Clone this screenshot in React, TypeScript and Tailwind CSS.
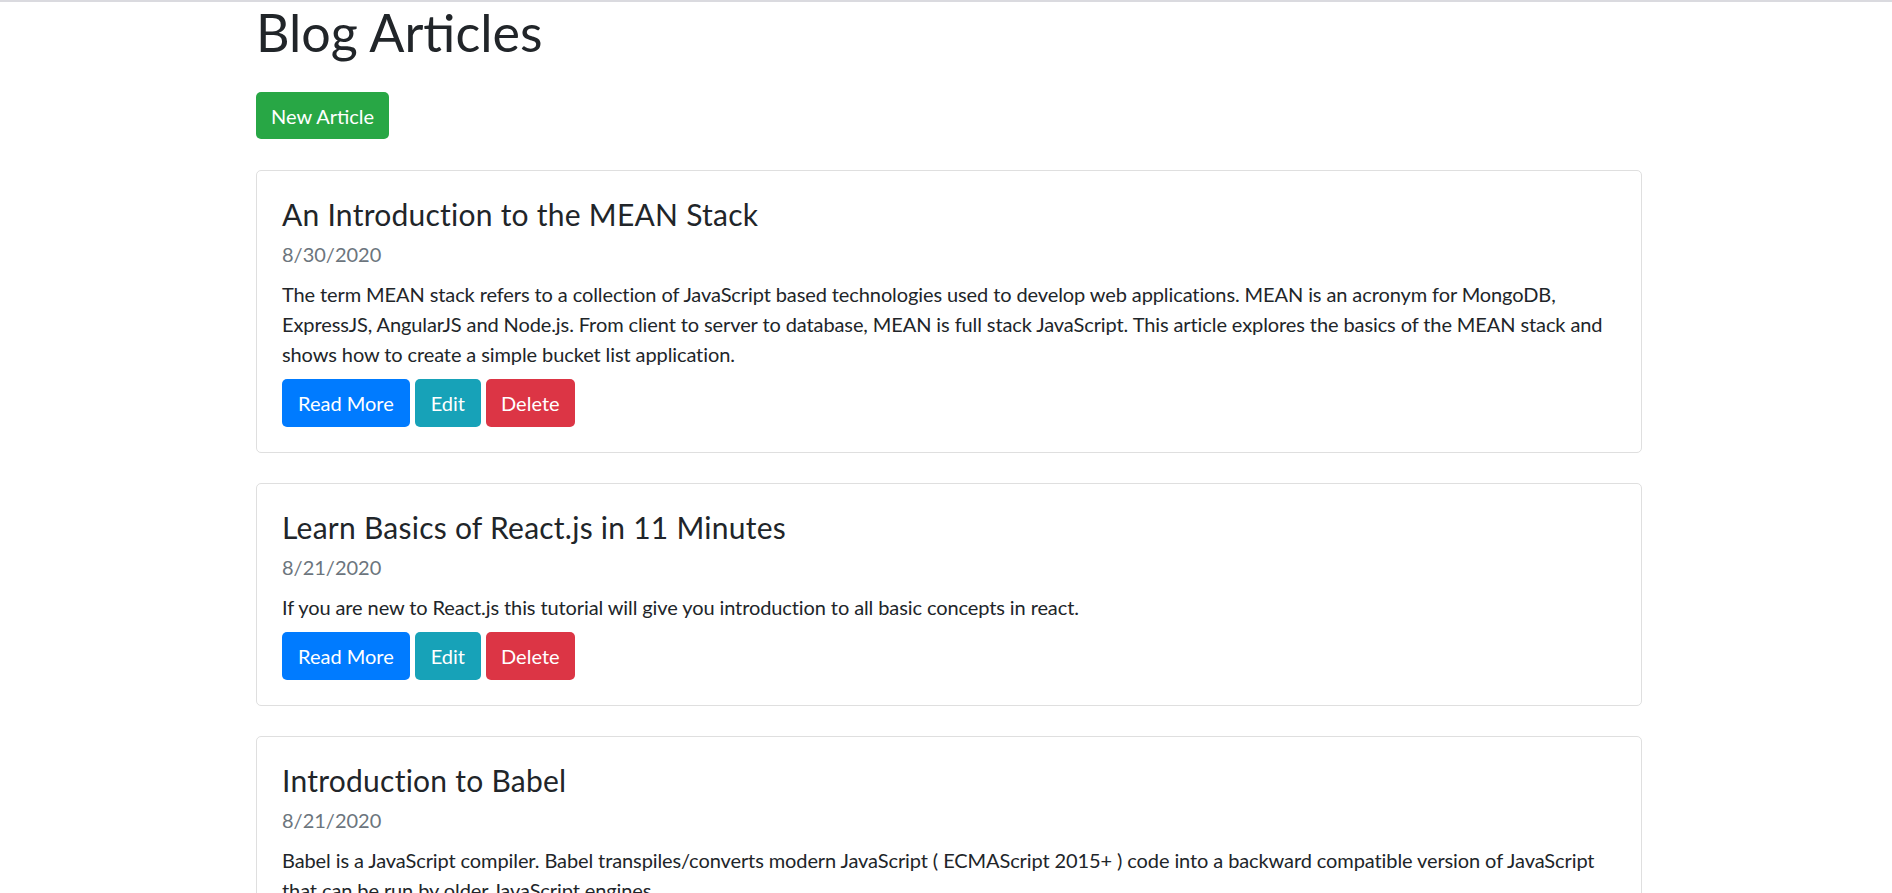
const ARTICLES = [
  {
    title: 'An Introduction to the MEAN Stack',
    date: '8/30/2020',
    text: 'The term MEAN stack refers to a collection of JavaScript based technologies used to develop web applications. MEAN is an acronym for MongoDB, ExpressJS, AngularJS and Node.js. From client to server to database, MEAN is full stack JavaScript. This article explores the basics of the MEAN stack and shows how to create a simple bucket list application.',
  },
  {
    title: 'Learn Basics of React.js in 11 Minutes',
    date: '8/21/2020',
    text: 'If you are new to React.js this tutorial will give you introduction to all basic concepts in react.',
  },
  {
    title: 'Introduction to Babel',
    date: '8/21/2020',
    text: 'Babel is a JavaScript compiler. Babel transpiles/converts modern JavaScript ( ECMAScript 2015+ ) code into a backward compatible version of JavaScript that can be run by older JavaScript engines.',
  },
];

const font = { fontFamily: '"Segoe UI", Lato, "Noto Sans", sans-serif' };

export default function App() {
  return (
    <div className="min-h-screen bg-white text-[#212529]" style={font}>
      <div className="h-[2px] bg-[#dadadf]" />
      <div className="w-[1386px] ml-[256px]">
        {/* Header */}
        <h1 className="text-[52px] leading-[60px] font-normal mb-[30px]">Blog Articles</h1>
        <button className="h-[47px] px-[15px] rounded-[5px] bg-[#28a745] text-white text-[20px] leading-[30px]">
          New Article
        </button>

        {/* Articles */}
        <div className="mt-[31px] flex flex-col gap-[30px]">
          {ARTICLES.map(a => (
            <div key={a.title} className="border border-[#dfdfdf] rounded-[5px] px-[25px] pt-[25px] pb-[25px]">
              <h4 className="text-[30px] leading-[36px] font-normal tracking-[0.25px]">{a.title}</h4>
              <h6 className="mt-[7px] mb-[10px] text-[20px] leading-[30px] text-[#6c757d]">{a.date}</h6>
              <p className="text-[20px] leading-[30px] mb-[10px] tracking-[-0.1px]">{a.text}</p>
              <div className="flex gap-[5px]">
                <button className="h-[48px] px-[16px] rounded-[5px] bg-[#007bff] text-white text-[20px]">Read More</button>
                <button className="h-[48px] px-[16px] rounded-[5px] bg-[#17a2b8] text-white text-[20px]">Edit</button>
                <button className="h-[48px] px-[15px] rounded-[5px] bg-[#dc3545] text-white text-[20px]">Delete</button>
              </div>
            </div>
          ))}
        </div>
      </div>
    </div>
  );
}
